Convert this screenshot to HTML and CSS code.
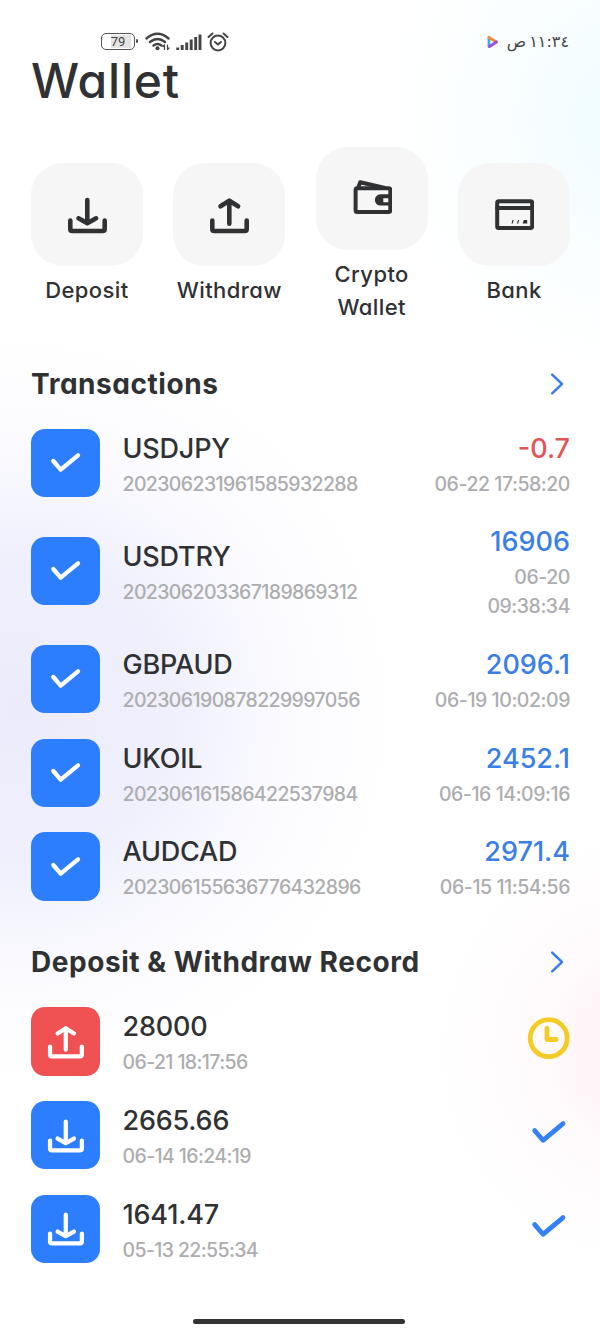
FILE: index.html
```html
<!DOCTYPE html>
<html lang="en">
<head>
  <meta charset="UTF-8">
  <meta name="viewport" content="width=device-width, initial-scale=1.0">
  <title>Wallet</title>
  <link rel="stylesheet" href="styles.css">
</head>
<body>
  <svg class="sprite">
    <symbol id="deposit" viewBox="0 0 40 40">
      <path d="M20.3 5v22M11.5 23.3l8.8 5 8.8-5M3.3 25.5V34q0 2 2 2h30.4q2 0 2-2v-8.5"/>
    </symbol>
    <symbol id="withdraw" viewBox="0 0 40 40">
      <path d="M20.3 28.8V6M11.5 11.3l8.8-5.6 8.8 5.6M3.3 25.5V34q0 2 2 2h30.4q2 0 2-2v-8.5"/>
    </symbol>
    <symbol id="check" viewBox="0 0 40 40">
      <path d="M8.3 18l7.4 8.7L33 12.3"/>
    </symbol>
    <symbol id="done" viewBox="0 0 42 42">
      <path d="M6.7 16.6l8.3 9.7 20-16.7"/>
    </symbol>
    <symbol id="arrow" viewBox="0 0 24 24">
      <path d="M6.2 2.6L16 12l-9.8 9.4"/>
    </symbol>
  </svg>

  <div class="status">
    <div class="status-left">
      <span class="battery"><span>79</span></span>
      <svg class="wifi" width="26" height="20" viewBox="0 0 26 20">
        <path d="M1.5 6.5Q12.5-3 23.5 6.5M5 10q7.5-6 15 0M8.5 13.5q4-3.2 8 0"/>
        <circle cx="12.5" cy="16.3" r="2"/>
        <path class="thin" d="M19.5 13v4.5M18 14.5l1.5-1.5M22.5 13v4.5M22.5 17.5l1.5-1.5"/>
      </svg>
      <svg class="signal" width="26" height="20" viewBox="0 0 26 20">
        <path d="M1.7 18v-2.5M6.2 18v-5M10.7 18v-7.5M15.2 18V7.5M19.7 18V5M24 18V2.5"/>
      </svg>
      <svg class="alarm" width="22" height="20" viewBox="0 0 22 20">
        <circle cx="11" cy="11" r="7.4"/>
        <path d="M1.5 5l4-3.5M20.5 5l-4-3.5M8 10l3 2.5 3-2.5"/>
      </svg>
    </div>
    <div class="status-right">
      <svg width="12" height="14" viewBox="0 0 12 14">
        <path d="M2 2.5v9" stroke="#43a9e8"/>
        <path d="M2 2.5L9.5 7" stroke="#f08a3c"/>
        <path d="M9.5 7l-7 4.5" stroke="#9a4fe0"/>
      </svg>
      <span class="time" dir="rtl" lang="ar">١١:٣٤ ص</span>
    </div>
  </div>

  <main>
    <h1>Wallet</h1>

    <div class="actions">
      <div class="action">
        <div class="card"><svg class="icon"><use href="#deposit"/></svg></div>
        <p>Deposit</p>
      </div>
      <div class="action">
        <div class="card"><svg class="icon"><use href="#withdraw"/></svg></div>
        <p>Withdraw</p>
      </div>
      <div class="action">
        <div class="card">
          <svg class="icon thin" viewBox="0 0 40 40">
            <rect x="3.6" y="9.3" width="34.7" height="23.7" rx="1.5"/>
            <path d="M6.5 8l1.7-4.8L32 8.8"/>
            <path class="fill" d="M38 15.3h-9.5a5.65 5.65 0 0 0 0 11.3H38v-3.3h-6.7v-4H38z"/>
          </svg>
        </div>
        <p>Crypto Wallet</p>
      </div>
      <div class="action">
        <div class="card">
          <svg class="icon thin" viewBox="0 0 40 40">
            <rect x="3.2" y="6.3" width="35" height="26.7" rx="1.5"/>
            <path d="M3.2 13h35"/>
            <path class="fill" d="M18.5 25h1.2l-1 3.5h-1.2zM24 25h1.2l-1 3.5H23zM29.7 25h3.5v3.5h-4.5z"/>
          </svg>
        </div>
        <p>Bank</p>
      </div>
    </div>

    <div class="head">
      <h2>Transactions</h2>
      <svg class="arrow"><use href="#arrow"/></svg>
    </div>
    <ul class="list">
      <li>
        <span class="tile"><svg class="tick"><use href="#check"/></svg></span>
        <div class="info"><b>USDJPY</b><small>202306231961585932288</small></div>
        <div class="amount down"><b>-0.7</b><small>06-22 17:58:20</small></div>
      </li>
      <li>
        <span class="tile"><svg class="tick"><use href="#check"/></svg></span>
        <div class="info"><b>USDTRY</b><small>202306203367189869312</small></div>
        <div class="amount"><b>16906</b><small>06-20<br>09:38:34</small></div>
      </li>
      <li>
        <span class="tile"><svg class="tick"><use href="#check"/></svg></span>
        <div class="info"><b>GBPAUD</b><small>202306190878229997056</small></div>
        <div class="amount"><b>2096.1</b><small>06-19 10:02:09</small></div>
      </li>
      <li>
        <span class="tile"><svg class="tick"><use href="#check"/></svg></span>
        <div class="info"><b>UKOIL</b><small>202306161586422537984</small></div>
        <div class="amount"><b>2452.1</b><small>06-16 14:09:16</small></div>
      </li>
      <li>
        <span class="tile"><svg class="tick"><use href="#check"/></svg></span>
        <div class="info"><b>AUDCAD</b><small>202306155636776432896</small></div>
        <div class="amount"><b>2971.4</b><small>06-15 11:54:56</small></div>
      </li>
    </ul>

    <div class="head record">
      <h2>Deposit &amp; Withdraw Record</h2>
      <svg class="arrow"><use href="#arrow"/></svg>
    </div>
    <ul class="list">
      <li>
        <span class="tile red"><svg><use href="#withdraw"/></svg></span>
        <div class="info"><b>28000</b><small>06-21 18:17:56</small></div>
        <svg class="state wait" viewBox="0 0 42 42">
          <circle cx="20.7" cy="18.2" r="18.5"/>
          <path d="M19 8.5v11h9"/>
        </svg>
      </li>
      <li>
        <span class="tile"><svg><use href="#deposit"/></svg></span>
        <div class="info"><b>2665.66</b><small>06-14 16:24:19</small></div>
        <svg class="state"><use href="#done"/></svg>
      </li>
      <li>
        <span class="tile"><svg><use href="#deposit"/></svg></span>
        <div class="info"><b>1641.47</b><small>05-13 22:55:34</small></div>
        <svg class="state"><use href="#done"/></svg>
      </li>
    </ul>
  </main>

  <div class="homebar"></div>
</body>
</html>
```
FILE: styles.css
```css
*{box-sizing:border-box; margin:0; padding:0;}
body{
  display:flex; flex-direction:column; height:1333px; overflow:hidden;
  font-family:Inter, "Liberation Sans", sans-serif; font-weight:500; color:#303133;
  font-feature-settings:"cv11" 1;
  background:
    radial-gradient(circle 260px at 640px 120px, #edfbff, rgba(243,253,255,.5) 50%, rgba(255,255,255,0)),
    radial-gradient(circle 220px at 650px 1050px, #ffedf2, rgba(255,246,249,.5) 50%, rgba(255,255,255,0)),
    radial-gradient(circle 380px at 20px 710px, #ebebfb, #f0f0fd 40%, rgba(250,250,255,.6) 75%, rgba(255,255,255,0)),
    #fff;
}
svg{fill:none; stroke:currentColor; stroke-width:4.6; stroke-linecap:round; stroke-linejoin:round; flex-shrink:0;}
.sprite{display:none;}
.thin{stroke-width:4;}
.fill{fill:currentColor; stroke:none;}

.status{display:flex; justify-content:space-between; align-items:center; height:58px; padding:25px 31px 0 101px; color:#444;}
.status-left,.status-right{display:flex; align-items:center;}
.battery{position:relative; display:flex; width:34px; height:17px; margin-right:10px; padding:1px 3px; border:1.5px solid #555; border-radius:5px; font:400 13px/13px Roboto, sans-serif;}
.battery span{flex:1; background:linear-gradient(to right, transparent 22%, #e4e4e4 22%); text-align:center;}
.battery:after{content:""; position:absolute; right:-4px; top:5px; width:2px; height:4px; border-radius:1px; background:#555;}
.wifi{margin-right:5px; stroke-width:2.4;}
.wifi circle{fill:currentColor; stroke:none;}
.wifi .thin{stroke-width:1.2;}
.signal{margin-right:5px; stroke-width:2.9; stroke-linecap:butt;}
.alarm{stroke-width:2;}
.status-right svg{margin-right:8px; stroke-width:2.8;}
.time{font:400 16px/20px "DejaVu Sans", sans-serif; word-spacing:-2px; letter-spacing:-.9px;}

main{padding:0 30px 0 31px;}
h1{height:89px; font-size:48px; font-weight:500; line-height:45px; letter-spacing:.8px;}
.actions{display:grid; grid-template-columns:repeat(4, 1fr); gap:30.5px; align-items:center; height:176px;}
.action{text-align:center;}
.card{display:flex; align-items:center; justify-content:center; height:103px; margin-bottom:8px; border-radius:32px; background:rgba(245,245,246,.92);}
.icon{width:40px; height:40px;}
.action p{font-size:22px; line-height:32.5px; letter-spacing:.4px;}

.head{display:flex; justify-content:space-between; align-items:center; height:42px; margin:40px 0 11px;}
.record{margin:27px 0 12px;}
h2{font-size:28px; font-weight:700; letter-spacing:.55px;}
.arrow{width:24px; height:24px; color:#3b7fe6; stroke-width:2.5;}

.list{list-style:none;}
.list li{display:flex; align-items:center; padding:12.6px 0;}
.tile{display:flex; align-items:center; justify-content:center; width:68.5px; height:68.5px; margin-right:23px; border-radius:14px; background:#2d7dff; color:#fff;}
.tile svg{width:37px; height:37px;}
.tile .tick{width:40px; height:40px; stroke-width:4.3;}
.red{background:#f05152;}
.info{flex:1;}
b,small{display:block;}
b{margin-bottom:1px; font-size:27px; line-height:40px; font-weight:500;}
small{margin-bottom:-1px; font-size:19.5px; line-height:28.6px; letter-spacing:-.62px; color:#adadaf; font-weight:450;}
.info b{letter-spacing:-.2px;}
.amount{text-align:right;}
.amount b{color:#3b7fe6;}
.amount small{letter-spacing:-.45px;}
.down b{color:#e05656;}
.state{width:42px; height:42px; color:#3580f5; stroke-width:4.8; overflow:visible;}
.wait{color:#f5cc25;}

.homebar{width:212px; height:5px; margin:auto auto 9px 193px; border-radius:3px; background:#333;}
```
